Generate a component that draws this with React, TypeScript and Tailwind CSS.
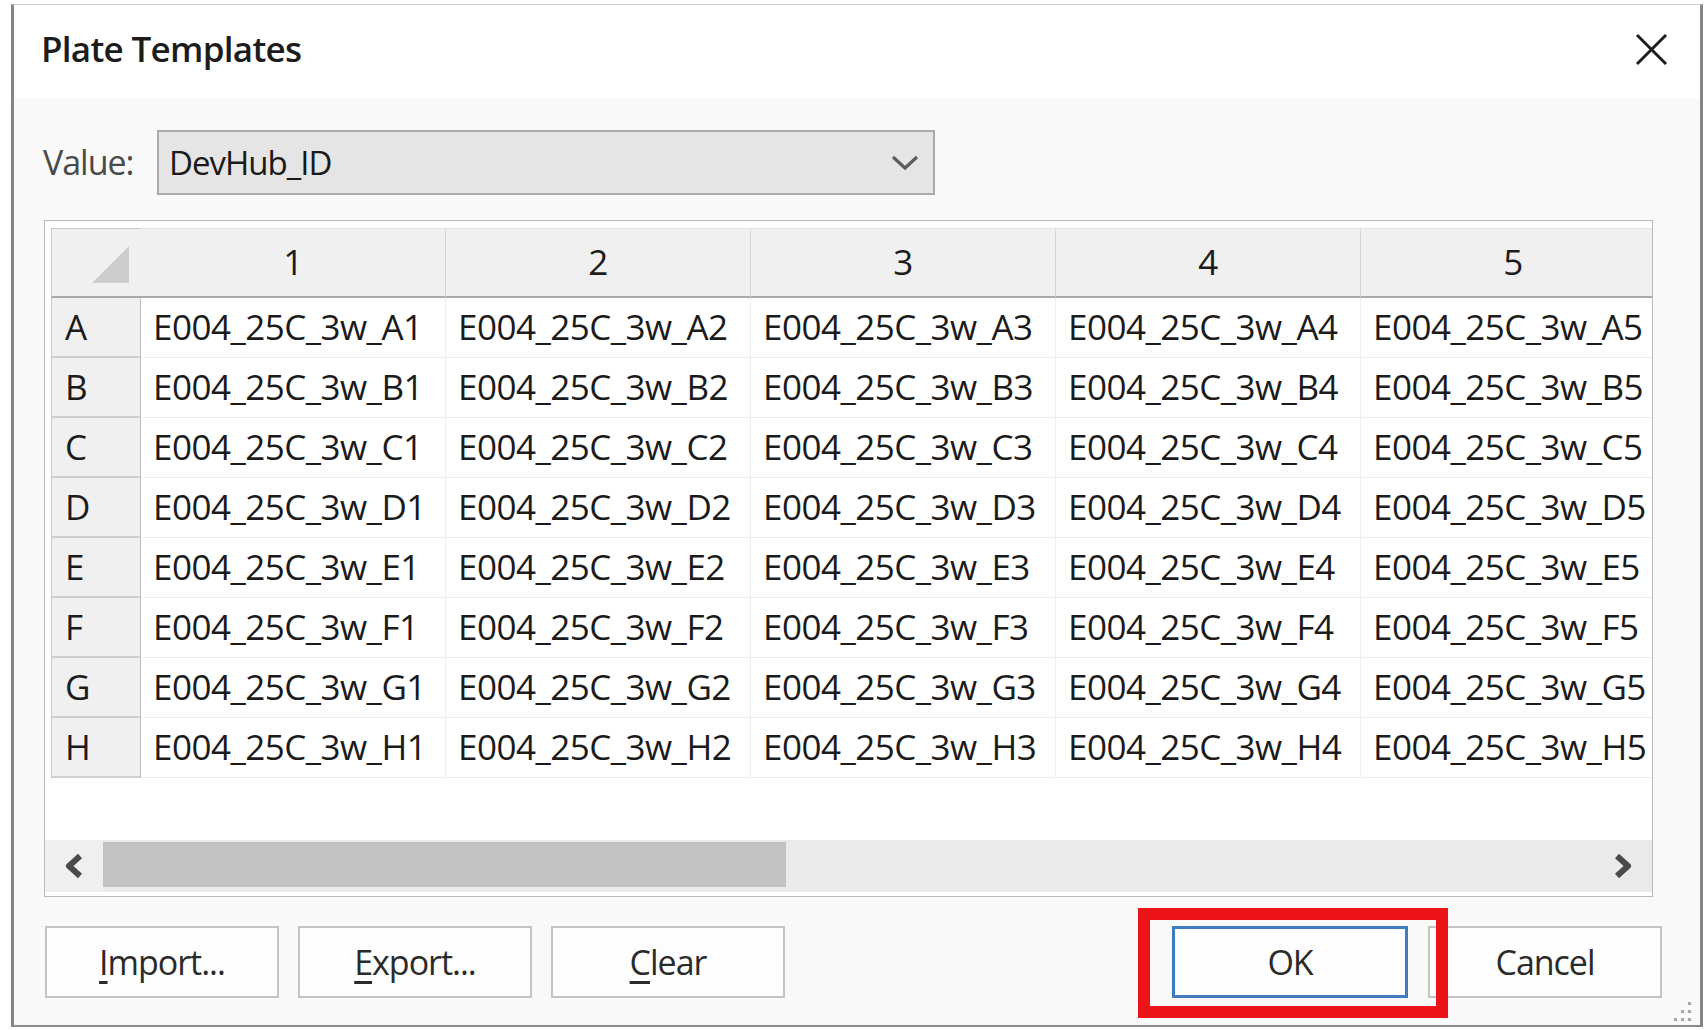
const rows = ['A', 'B', 'C', 'D', 'E', 'F', 'G', 'H'];
const cols = [1, 2, 3, 4, 5];

const DialogButton = ({ children, primary }: { children: React.ReactNode; primary?: boolean }) => {
  return (
    <button
      className={
        primary
          ? 'w-[236px] h-[72px] bg-[#fdfdfd] border-[3px] border-[#3d7cbf] text-[34px] font-medium tracking-[-0.03em] text-[#2a2a2a] flex items-center justify-center'
          : 'w-[234px] h-[72px] bg-[#fdfdfd] border-2 border-[#c4c4c4] text-[34px] font-medium tracking-[-0.03em] text-[#2a2a2a] flex items-center justify-center'
      }
    >
      {children}
    </button>
  );
};

const App = () => {
  return (
    <div className="w-[1708px] h-[1030px] bg-white font-['Open_Sans',sans-serif] pt-[4px] pl-[11px] overflow-hidden">
      <div className="relative w-[1692px] h-[1023px] flex flex-col border-l-[3px] border-r-[3px] border-t border-b-2 border-l-[#858585] border-r-[#858585] border-t-[#cbcbcb] border-b-[#8a8a8a]">
        {/* title bar */}
        <div className="h-[93px] bg-white flex items-center justify-between pl-[27px] pr-[32px] pb-[4px]">
          <h1 className="text-[35px] font-semibold tracking-[-0.02em] text-[#1c1c1c]">Plate Templates</h1>
          <svg width="33" height="33" viewBox="0 0 33 33">
            <line x1="2" y1="2" x2="31" y2="31" stroke="#1e1e1e" strokeWidth="3" />
            <line x1="31" y1="2" x2="2" y2="31" stroke="#1e1e1e" strokeWidth="3" />
          </svg>
        </div>

        <div className="flex-1 bg-[#f9f9f9] flex flex-col">
          {/* value selector */}
          <div className="flex items-center mt-[32px] pl-[29px]">
            <span className="w-[114px] text-[34px] font-medium tracking-[-0.03em] text-[#4a4a4a]">Value:</span>
            <div className="w-[778px] h-[65px] bg-[#e5e5e5] border-2 border-[#ababab] flex items-center justify-between pl-[10px] pr-[14px]">
              <span className="text-[33px] font-medium tracking-[-0.03em] text-[#1a1a1a]">DevHub_ID</span>
              <svg width="28" height="16" viewBox="0 0 28 16">
                <polyline points="2,2 14,13 26,2" fill="none" stroke="#5c5c5c" strokeWidth="3.2" />
              </svg>
            </div>
          </div>

          {/* grid */}
          <div className="ml-[30px] mt-[25px] w-[1609px] h-[677px] bg-white border border-[#b9b9b9] flex flex-col">
            <div className="flex-1 overflow-hidden pl-[6px] pt-[7px]">
              <div className="grid grid-cols-[90px_305px_305px_305px_305px_305px] grid-rows-[70px_repeat(8,60px)] w-max text-[35px] font-medium tracking-[-0.015em] text-[#1b1b1b]">
                <div className="bg-[#f0f0f0] border-l border-t border-[#cacaca] border-r-[#bdbdbd] border-b-2 border-b-[#a9a9a9] flex items-end justify-end pr-[12px] pb-[13px]">
                  <svg width="37" height="37" viewBox="0 0 37 37">
                    <polygon points="37,0 37,37 0,37" fill="#cdcdcd" />
                  </svg>
                </div>
                {cols.map((c) => (
                  <div
                    key={c}
                    className="bg-[#f0f0f0] border-t border-t-[#e2e2e2] border-r border-r-[#d6d6d6] border-b-2 border-b-[#a9a9a9] flex items-center justify-center"
                  >
                    {c}
                  </div>
                ))}
                {rows.map((r) => (
                  <>
                    <div
                      key={r}
                      className="bg-[#f0f0f0] border-l border-l-[#cacaca] border-r border-r-[#bdbdbd] border-b-2 border-b-[#cfcfcf] flex items-center pl-[13px]"
                    >
                      {r}
                    </div>
                    {cols.map((c) => (
                      <div
                        key={r + c}
                        className="bg-white border-r border-b border-[#eeeeee] flex items-center pl-[12px] whitespace-nowrap"
                      >
                        E004_25C_3w_{r}{c}
                      </div>
                    ))}
                  </>
                ))}
              </div>
            </div>

            {/* horizontal scrollbar */}
            <div className="h-[52px] mb-[4px] flex bg-[#eaeaea]">
              <div className="w-[58px] bg-[#efefef] flex items-center justify-center">
                <svg width="24" height="26" viewBox="0 0 24 26">
                  <polyline points="18,3 7,13 18,23" fill="none" stroke="#4a4a4a" strokeWidth="6" strokeLinejoin="round" />
                </svg>
              </div>
              <div className="flex-1 flex items-start pt-[2px]">
                <div className="w-[683px] h-[45px] bg-[#c2c2c2]" />
              </div>
              <div className="w-[58px] flex items-center justify-center">
                <svg width="24" height="26" viewBox="0 0 24 26">
                  <polyline points="6,3 17,13 6,23" fill="none" stroke="#4a4a4a" strokeWidth="6" strokeLinejoin="round" />
                </svg>
              </div>
            </div>
          </div>

          {/* buttons */}
          <div className="mt-[29px] flex items-center justify-between pl-[31px] pr-[38px]">
            <div className="flex gap-[19px]">
              <DialogButton>
                <span>
                  <span className="underline underline-offset-[6px]">I</span>mport...
                </span>
              </DialogButton>
              <DialogButton>
                <span>
                  <span className="underline underline-offset-[6px]">E</span>xport...
                </span>
              </DialogButton>
              <DialogButton>
                <span>
                  <span className="underline underline-offset-[6px]">C</span>lear
                </span>
              </DialogButton>
            </div>
            <div className="flex gap-[20px]">
              <div className="relative">
                <DialogButton primary>OK</DialogButton>
                <div className="absolute -left-[34px] -top-[18px] w-[310px] h-[110px] border-[12px] border-[#ec1418]" />
              </div>
              <DialogButton>Cancel</DialogButton>
            </div>
          </div>
        </div>

        {/* resize grip */}
        <svg className="absolute right-[7px] bottom-[2px]" width="26" height="24" viewBox="0 0 26 24">
          <rect x="21" y="3" width="3" height="3" fill="#a6a6a6" />
          <rect x="14" y="11" width="3" height="3" fill="#a6a6a6" />
          <rect x="21" y="11" width="3" height="3" fill="#a6a6a6" />
          <rect x="7" y="19" width="3" height="3" fill="#a6a6a6" />
          <rect x="14" y="19" width="3" height="3" fill="#a6a6a6" />
          <rect x="21" y="19" width="3" height="3" fill="#a6a6a6" />
        </svg>
      </div>
    </div>
  );
};

export default App;
